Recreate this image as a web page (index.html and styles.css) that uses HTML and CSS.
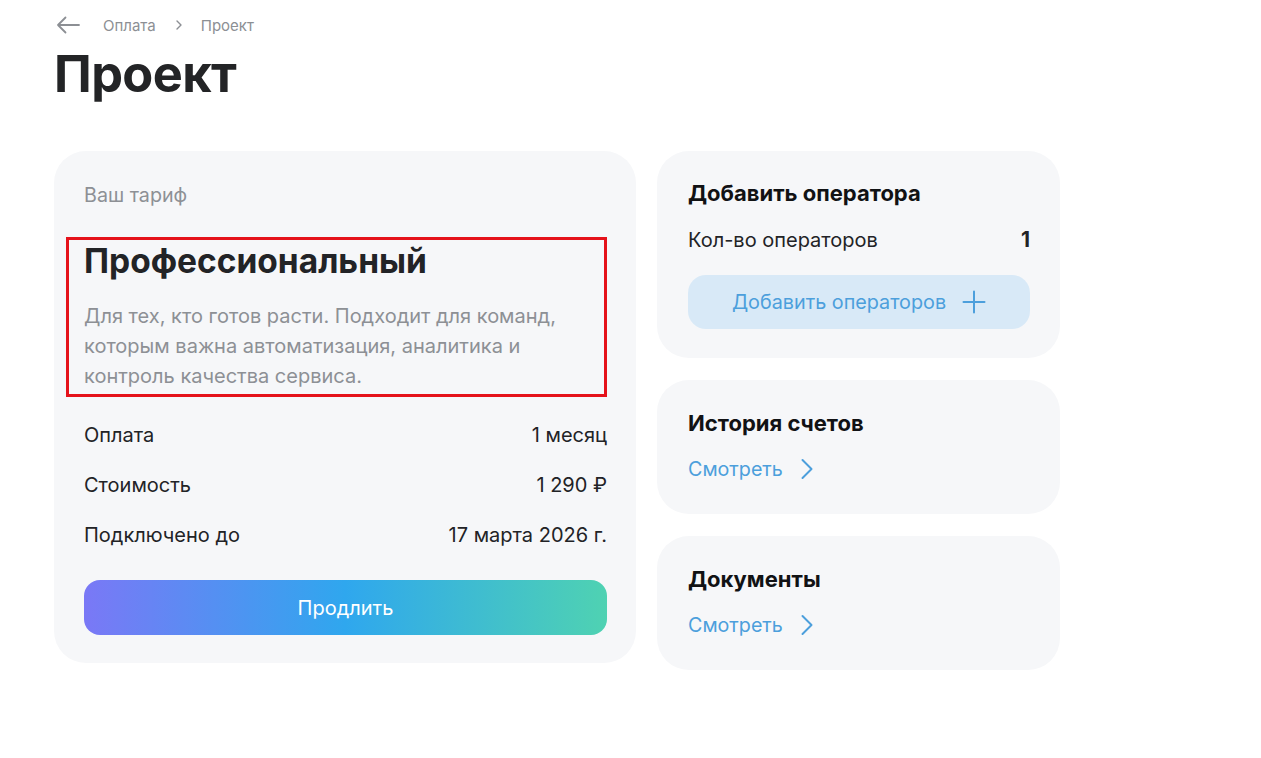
FILE: index.html
```html
<!DOCTYPE html>
<html lang="ru">
<head>
<meta charset="utf-8">
<title>Проект</title>
<link rel="stylesheet" href="styles.css">
</head>
<body>
<div class="page">
  <nav class="crumbs">
    <svg class="back" width="24" height="18" viewBox="0 0 24 18" fill="none" stroke="#8c8f94" stroke-width="1.8" stroke-linecap="round" stroke-linejoin="round"><path d="M23 9H2M9.5 1.5L2 9l7.5 7.5"/></svg>
    <span class="crumb">Оплата</span>
    <svg class="sep" width="8" height="12" viewBox="0 0 8 12" fill="none" stroke="#8c8f94" stroke-width="1.4" stroke-linecap="round" stroke-linejoin="round"><path d="M2 2l4 4-4 4"/></svg>
    <span class="crumb">Проект</span>
  </nav>
  <h1 class="title">Проект</h1>

  <div class="layout">
    <section class="card tariff">
      <div class="label">Ваш тариф</div>
      <div class="plan">
        <h2 class="plan-name">Профессиональный</h2>
        <p class="plan-desc">Для тех, кто готов расти. Подходит для команд, которым важна автоматизация, аналитика и контроль качества сервиса.</p>
        <div class="mark"></div>
      </div>
      <div class="rows">
        <div class="row"><span>Оплата</span><span>1 месяц</span></div>
        <div class="row"><span>Стоимость</span><span>1 290 ₽</span></div>
        <div class="row"><span>Подключено до</span><span>17 марта 2026 г.</span></div>
      </div>
      <button class="extend">Продлить</button>
    </section>

    <div class="side">
      <section class="card small ops">
        <h3 class="card-title">Добавить оператора</h3>
        <div class="count"><span>Кол-во операторов</span><span class="num">1</span></div>
        <button class="add">Добавить операторов
          <svg width="24" height="24" viewBox="0 0 24 24" fill="none" stroke="#4c9fdc" stroke-width="2" stroke-linecap="round"><path d="M12 1.5v21M1.5 12h21"/></svg>
        </button>
      </section>
      <section class="card small">
        <h3 class="card-title">История счетов</h3>
        <a class="link">Смотреть
          <svg width="14" height="22" viewBox="0 0 14 22" fill="none" stroke="#4c9fdc" stroke-width="2" stroke-linecap="round" stroke-linejoin="round"><path d="M2.5 2l9 9-9 9"/></svg>
        </a>
      </section>
      <section class="card small">
        <h3 class="card-title">Документы</h3>
        <a class="link">Смотреть
          <svg width="14" height="22" viewBox="0 0 14 22" fill="none" stroke="#4c9fdc" stroke-width="2" stroke-linecap="round" stroke-linejoin="round"><path d="M2.5 2l9 9-9 9"/></svg>
        </a>
      </section>
    </div>
  </div>
</div>
</body>
</html>
```

FILE: styles.css
```css
* { box-sizing: border-box; }
html, body { margin: 0; padding: 0; background: #fff; }
body {
  font-family: Inter, "Noto Sans", sans-serif;
  color: #222326;
}
.page { padding: 14px 0 0 54px; }

.crumbs {
  display: flex;
  align-items: center;
  height: 22px;
  color: #8c8f94;
  font-size: 15px;
}
.back { margin-left: 2px; margin-right: 23px; }
.sep { margin: 0 18px 0 19px; }

.title {
  margin: 8px 0 0;
  font-size: 50.5px;
  line-height: 60px;
  font-weight: 700;
  color: #232426;
  letter-spacing: -0.6px;
}

.layout {
  display: flex;
  align-items: flex-start;
  gap: 21px;
  margin-top: 47px;
}

.card {
  background: #f6f7f9;
  border-radius: 32px;
}

.tariff {
  width: 582px;
  padding: 31px 29px 28px 30px;
}
.label {
  font-size: 19.7px;
  line-height: 26px;
  color: #8d9095;
}
.plan {
  position: relative;
  margin-top: 33px;
}
.plan-name {
  margin: 0;
  font-size: 33.5px;
  line-height: 40px;
  font-weight: 700;
  color: #222326;
}
.plan-desc {
  margin: 20px 0 0;
  font-size: 20px;
  line-height: 30px;
  color: #8d9095;
}
.mark {
  position: absolute;
  left: -18px;
  right: 0;
  top: -4px;
  bottom: -6px;
  border: 3px solid #e5121b;
}

.rows { margin-top: 19px; }
.row {
  display: flex;
  justify-content: space-between;
  font-size: 20px;
  line-height: 26px;
  height: 50px;
  align-items: center;
  color: #222326;
}

.extend {
  display: block;
  width: 100%;
  height: 55px;
  margin-top: 20px;
  border: 0;
  border-radius: 16px;
  background: linear-gradient(90deg, #7a78f6 0%, #2fa7ee 50%, #4fd2b2 100%);
  color: #fff;
  font-family: inherit;
  font-size: 20px;
}

.side {
  width: 403px;
  display: flex;
  flex-direction: column;
  gap: 22px;
}
.small { padding: 28px 30px 32px 31px; }
.ops { padding-bottom: 29px; padding-top: 27px; }
.card-title {
  margin: 0;
  font-size: 22px;
  line-height: 30px;
  font-weight: 700;
  color: #111214;
}
.count {
  display: flex;
  justify-content: space-between;
  align-items: center;
  margin-top: 19px;
  font-size: 20px;
  line-height: 26px;
  color: #222326;
}
.num { font-weight: 700; font-size: 21px; }
.add {
  display: flex;
  align-items: center;
  justify-content: center;
  gap: 16px;
  width: 100%;
  height: 54px;
  margin-top: 22px;
  border: 0;
  border-radius: 18px;
  background: #d8e9f7;
  color: #4c9fdc;
  font-family: inherit;
  font-size: 19.8px;
}
.link {
  display: flex;
  align-items: center;
  gap: 17px;
  margin-top: 18px;
  color: #4c9fdc;
  font-size: 19.7px;
  line-height: 26px;
}
```
